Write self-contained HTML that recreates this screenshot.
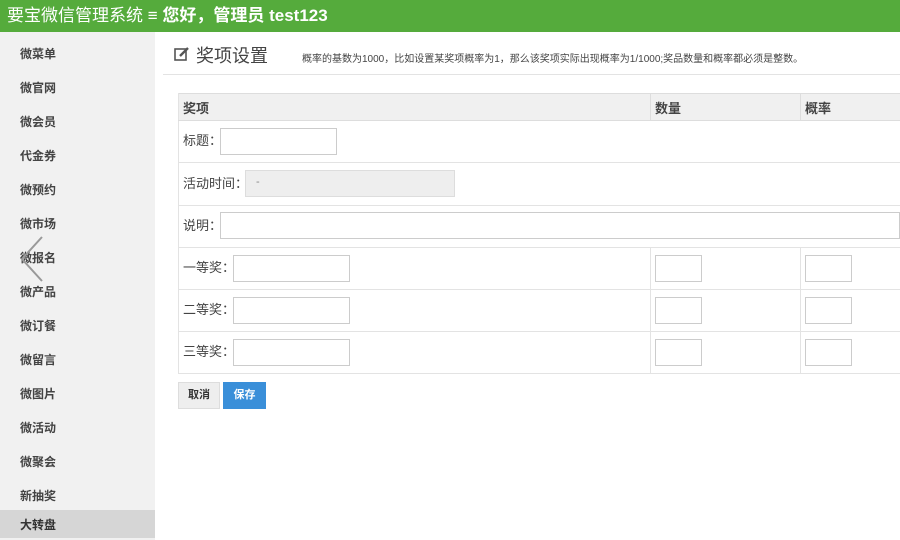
<!DOCTYPE html>
<html><head><meta charset="utf-8"><style>
*{margin:0;padding:0;box-sizing:border-box}
body{width:900px;height:540px;overflow:hidden;background:#fff;font-family:"Liberation Sans","Noto Sans CJK SC",sans-serif;position:relative;color:#333}
.hd{position:absolute;left:0;top:0;width:900px;height:32px;background:#55ab3c;color:#fff;font-size:17px;line-height:31px;padding-left:7px;white-space:nowrap}
.hd b{font-weight:bold}
.sb{position:absolute;left:0;top:32px;width:155px;height:508px;background:#f1f1f1}
.sb div{position:absolute;left:20px;font-size:12px;font-weight:bold;color:#444}
.sel{position:absolute;left:0;top:510px;width:155px;height:28px;background:#d6d6d6}
.t{position:absolute;font-size:13px;color:#444;white-space:nowrap}
.inp{position:absolute;border:1px solid #ccc;background:#fff}
.hl{position:absolute;height:1px;background:#e3e3e3}
.vl{position:absolute;width:1px;background:#e3e3e3}
</style></head><body>
<div class="hd">要宝微信管理系统 ≡ <b>您好，管理员 test123</b></div>
<div class="sb">
<div style="top:13px">微菜单</div><div style="top:47px">微官网</div><div style="top:81px">微会员</div><div style="top:115px">代金券</div><div style="top:149px">微预约</div><div style="top:183px">微市场</div><div style="top:217px">微报名</div><div style="top:251px">微产品</div><div style="top:285px">微订餐</div><div style="top:319px">微留言</div><div style="top:353px">微图片</div><div style="top:387px">微活动</div><div style="top:421px">微聚会</div><div style="top:455px">新抽奖</div>
</div>
<div class="sel"></div>
<div style="position:absolute;left:20px;top:516px;font-size:12px;font-weight:bold;color:#333">大转盘</div>
<svg style="position:absolute;left:18px;top:235px" width="28" height="48"><path d="M24 2 L4 24 L24 46" stroke="#999" stroke-width="2" fill="none"/></svg>
<svg style="position:absolute;left:174px;top:46px" width="16" height="16"><rect x="1" y="3" width="11" height="11" fill="none" stroke="#555" stroke-width="1.6"/><path d="M6 10 L14 2" stroke="#555" stroke-width="2.4"/></svg>
<div class="t" style="left:196px;top:42px;font-size:18px">奖项设置</div>
<div class="t" style="left:302px;top:50px;font-size:10px">概率的基数为1000，比如设置某奖项概率为1，那么该奖项实际出现概率为1/1000;奖品数量和概率都必须是整数。</div>
<div class="hl" style="left:163px;top:74px;width:737px"></div>
<div style="position:absolute;left:178px;top:93px;width:722px;height:27px;background:#f0f0f0;border-top:1px solid #ddd"></div>
<div class="t" style="left:183px;top:98px;font-weight:bold">奖项</div>
<div class="t" style="left:655px;top:98px;font-weight:bold">数量</div>
<div class="t" style="left:805px;top:98px;font-weight:bold">概率</div>
<div class="vl" style="left:178px;top:93px;height:280px"></div>
<div class="vl" style="left:650px;top:93px;height:27px;background:#ddd"></div>
<div class="vl" style="left:800px;top:93px;height:27px;background:#ddd"></div>
<div class="vl" style="left:650px;top:247px;height:126px"></div>
<div class="vl" style="left:800px;top:247px;height:126px"></div>
<div class="hl" style="left:178px;top:120px;width:722px;background:#ddd"></div>
<div class="hl" style="left:178px;top:162px;width:722px"></div>
<div class="hl" style="left:178px;top:205px;width:722px"></div>
<div class="hl" style="left:178px;top:247px;width:722px"></div>
<div class="hl" style="left:178px;top:289px;width:722px"></div>
<div class="hl" style="left:178px;top:331px;width:722px"></div>
<div class="hl" style="left:178px;top:373px;width:722px"></div>
<div class="t" style="left:183px;top:130px">标题：</div><div class="inp" style="left:220px;top:128px;width:117px;height:27px"></div>
<div class="t" style="left:183px;top:173px">活动时间：</div><div class="inp" style="left:245px;top:170px;width:210px;height:27px;background:#eee;border-color:#ddd"><span style="position:absolute;left:10px;top:5px;font-size:11px;color:#888">-</span></div>
<div class="t" style="left:183px;top:215px">说明：</div><div class="inp" style="left:220px;top:212px;width:680px;height:27px"></div>
<div class="t" style="left:183px;top:257px">一等奖：</div><div class="inp" style="left:233px;top:255px;width:117px;height:27px"></div>
<div class="t" style="left:183px;top:299px">二等奖：</div><div class="inp" style="left:233px;top:297px;width:117px;height:27px"></div>
<div class="t" style="left:183px;top:341px">三等奖：</div><div class="inp" style="left:233px;top:339px;width:117px;height:27px"></div>
<div class="inp" style="left:655px;top:255px;width:47px;height:27px"></div><div class="inp" style="left:805px;top:255px;width:47px;height:27px"></div>
<div class="inp" style="left:655px;top:297px;width:47px;height:27px"></div><div class="inp" style="left:805px;top:297px;width:47px;height:27px"></div>
<div class="inp" style="left:655px;top:339px;width:47px;height:27px"></div><div class="inp" style="left:805px;top:339px;width:47px;height:27px"></div>
<div style="position:absolute;left:178px;top:382px;width:42px;height:27px;background:#eee;border:1px solid #ddd;font-size:11px;font-weight:bold;text-align:center;line-height:25px">取消</div>
<div style="position:absolute;left:223px;top:382px;width:43px;height:27px;background:#3a8fd9;color:#fff;font-size:11px;font-weight:bold;text-align:center;line-height:27px">保存</div>
</body></html>
